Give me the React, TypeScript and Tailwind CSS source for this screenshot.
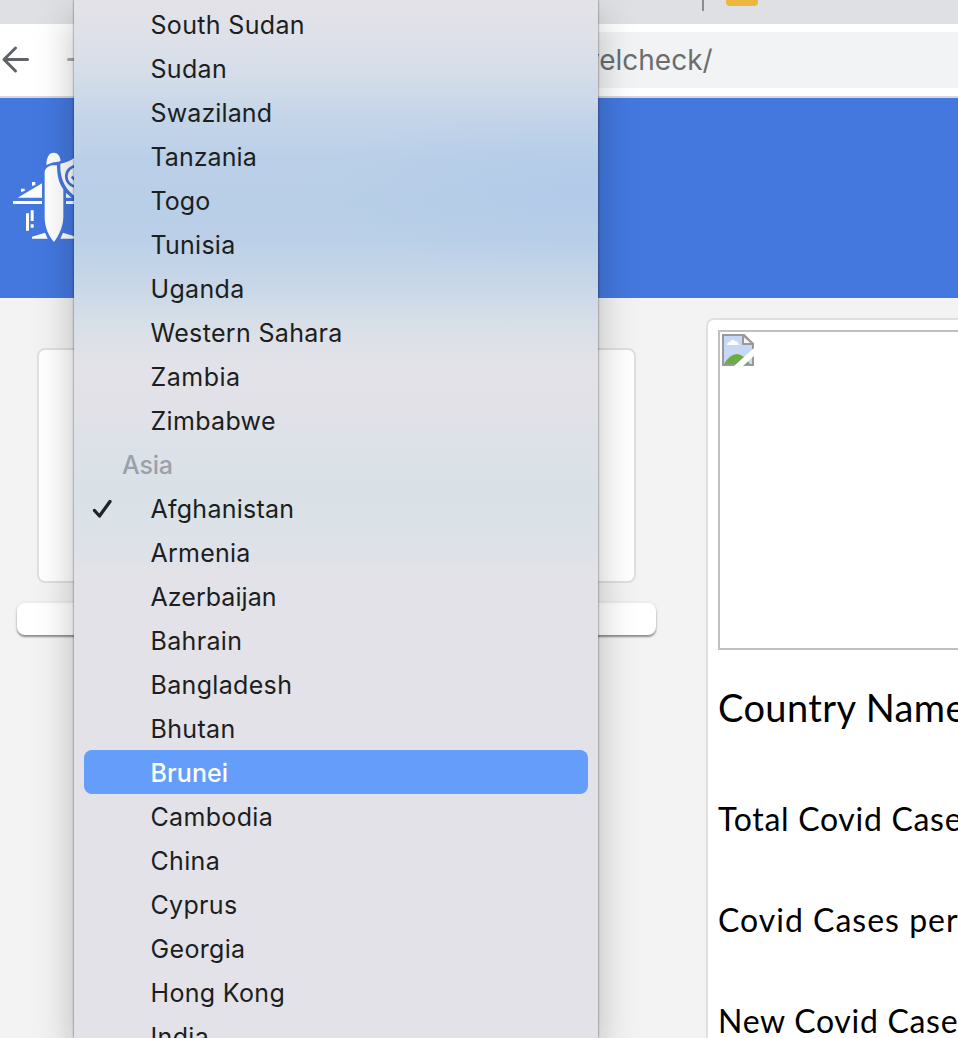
import React from "react";

type Row = { label: string; kind?: "group" | "checked" | "active"; spacing?: number };

const rows: Row[] = [
  { label: "South Sudan" },
  { label: "Sudan" },
  { label: "Swaziland", spacing: 0.12 },
  { label: "Tanzania", spacing: 0.05 },
  { label: "Togo", spacing: 0.1 },
  { label: "Tunisia", spacing: 0.25 },
  { label: "Uganda" },
  { label: "Western Sahara" },
  { label: "Zambia", spacing: 0.5 },
  { label: "Zimbabwe" },
  { label: "Asia", kind: "group", spacing: -0.2 },
  { label: "Afghanistan", kind: "checked", spacing: 0.25 },
  { label: "Armenia", spacing: 0.25 },
  { label: "Azerbaijan", spacing: 0.05 },
  { label: "Bahrain" },
  { label: "Bangladesh" },
  { label: "Bhutan" },
  { label: "Brunei", kind: "active", spacing: 0.1 },
  { label: "Cambodia" },
  { label: "China" },
  { label: "Cyprus" },
  { label: "Georgia" },
  { label: "Hong Kong" },
  { label: "India" },
];

function Logo() {
  return (
    <svg width="80" height="115" viewBox="0 0 240 345" fill="#ffffff" className="shrink-0">
      <path d="M139 105C140 81 147 68 161 68C173 68 180 77 182 92L176 95Q158 95 139 105Z" />
      <path d="M134 124C139 108 154 104 171 106C171 135 176 159 190 178V262C189 290 178 315 162 336C144 315 134 290 134 262Z" />
      <path d="M53 203L126 160V203ZM39 213H126V222H39ZM96 156H106V165L96 168ZM63 176H74V183L63 186Z" />
      <path d="M78 250H87V302H78ZM92 241H101V273H92ZM92 283H101V293H92Z" />
      <path d="M96 326V320L135 308L143 326ZM181 326L189 308L228 320V326ZM198 189L215 203H198ZM198 213H228V222H198Z" />
      <path d="M181 101Q206 97 222 84L240 93V210C199 184 179 151 181 101Z" />
      <circle cx="230" cy="139" r="31" fill="none" stroke="#4478df" strokeWidth="8" />
      <path d="M215 140L224 149" fill="none" stroke="#4478df" strokeWidth="8" />
    </svg>
  );
}

function BrokenImage() {
  return (
    <svg width="32" height="32" viewBox="0 0 32 32">
      <path d="M1 1H22L31 10V31H1Z" fill="#c6d8f5" />
      <path d="M5 11Q5 8 8 8Q10 4 13 7Q16 7 17 11Z" fill="#fff" />
      <path d="M2 30Q8 20 15 20Q21 20 28 30Z" fill="#6dab45" />
      <path d="M1 31V1H22L31 10V31Z" fill="none" stroke="#999" strokeWidth="2" />
      <path d="M21 1V10H31Z" fill="#f4f4f4" stroke="#999" strokeWidth="2" />
      <path d="M12 32L32 14V22L21 32Z" fill="#fff" />
    </svg>
  );
}

function MenuRow({ label, kind, spacing = 0.33 }: Row) {
  const tone =
    kind === "active"
      ? "bg-[#649efa] text-white pl-[66.5px] font-medium"
      : kind === "group"
        ? "text-[#9ba1aa] pl-[38px] font-medium"
        : "text-[#1c1e20] pl-[66.5px]";
  return (
    <li className={`relative flex h-11 shrink-0 items-center rounded-lg pt-[3px] text-[25px] ${tone}`}>
      {kind === "checked" && (
        <svg className="absolute left-2 top-[12px]" width="22" height="22" viewBox="0 0 22 22" fill="none">
          <path d="M2.500 12.500L7.500 18L18 3.500" stroke="#202224" strokeWidth="3.300" strokeLinecap="round" strokeLinejoin="round" />
        </svg>
      )}
      <span style={{ letterSpacing: spacing }}>{label}</span>
    </li>
  );
}

export default function App() {
  return (
    <div className="relative flex h-[1038px] w-[958px] flex-col overflow-hidden bg-[#f3f3f3] font-['Inter',sans-serif]">
      <div className="flex h-6 shrink-0 items-start bg-[#dee0e4] pl-[702px]">
        <div className="h-[11px] w-0.5 bg-[#8b8d91]" />
        <div className="ml-[22px] h-1.5 w-8 rounded-b bg-[#ecb640]" />
      </div>
      <div className="flex h-[74px] shrink-0 items-center border-b-2 border-[#d6d8dc] bg-white">
        <svg className="shrink-0" width="100" height="32" viewBox="0 0 100 32" fill="none" strokeWidth="3" strokeLinecap="round" strokeLinejoin="round">
          <path d="M27.500 15.500H4M15.500 4L4 15.500L15.500 27" stroke="#5f6368" />
          <path d="M68.500 15.500H92" stroke="#a9abae" />
        </svg>
        <div className="ml-[100px] flex h-14 flex-1 items-center bg-[#f1f3f4] pl-[384px] text-[28px] text-[#6b6d70]">
          velcheck/
        </div>
      </div>
      <header className="flex h-[200px] shrink-0 items-start bg-[#4478df] pt-8">
        <Logo />
      </header>
      <main className="flex min-h-0 flex-1 items-start">
        <section className="flex w-[706px] shrink-0 flex-col pl-[17px] pt-[50px]">
          <div className="ml-5 h-[235px] w-[599px] rounded-lg border-2 border-[#dfdfdf] bg-white" />
          <div className="mt-5 h-8 w-[639px] rounded-lg bg-white shadow-[0_2px_2px_rgba(0,0,0,0.4),0_0_4px_rgba(0,0,0,0.08)]" />
        </section>
        <section className="mt-5 h-[760px] w-[400px] shrink-0 rounded-tl-lg border-2 border-[#dfdfdf] bg-white pl-2.5 pt-2.5 font-['Lato',sans-serif] text-black">
          <div className="h-80 w-[360px] border-2 border-[#c0c0c0] p-0.5">
            <BrokenImage />
          </div>
          <h2 className="mt-8 whitespace-nowrap text-[38px] leading-[50px] tracking-[0.400px]">Country Name</h2>
          <div className="mt-[67px] flex flex-col gap-[61px] whitespace-nowrap text-[32px] leading-10 tracking-[1px]">
            <p className="tracking-[0.7px]">Total Covid Cases</p>
            <p>Covid Cases per</p>
            <p className="tracking-[0.7px]">New Covid Cases</p>
          </div>
        </section>
      </main>
      <ul className="absolute left-[74px] top-0 flex h-[1038px] w-[524px] flex-col overflow-hidden bg-[radial-gradient(ellipse_280px_80px_at_510px_190px,rgba(172,199,234,0.5),transparent),linear-gradient(to_bottom,#e3e2e8_0px,#dfe1e8_35px,#d4dde8_76px,#c5d5e8_115px,#bbd0e8_157px,#b9cfe7_205px,#bbd0e8_240px,#c3d4e8_267px,#cad8e7_292px,#d5dee7_318px,#dfe1e8_345px,#e3e2e8_370px,#e2e1e8_410px,#dce1e8_450px,#d9e1e7_490px,#d9e2e7_510px,#dee1e8_545px,#e3e2e8_575px)] px-2.5 pt-0.5 shadow-[0_0_2px_rgba(0,0,0,0.6),0_16px_36px_rgba(0,0,0,0.25)]">
        {rows.map((row) => (
          <MenuRow key={row.label} {...row} />
        ))}
      </ul>
    </div>
  );
}
